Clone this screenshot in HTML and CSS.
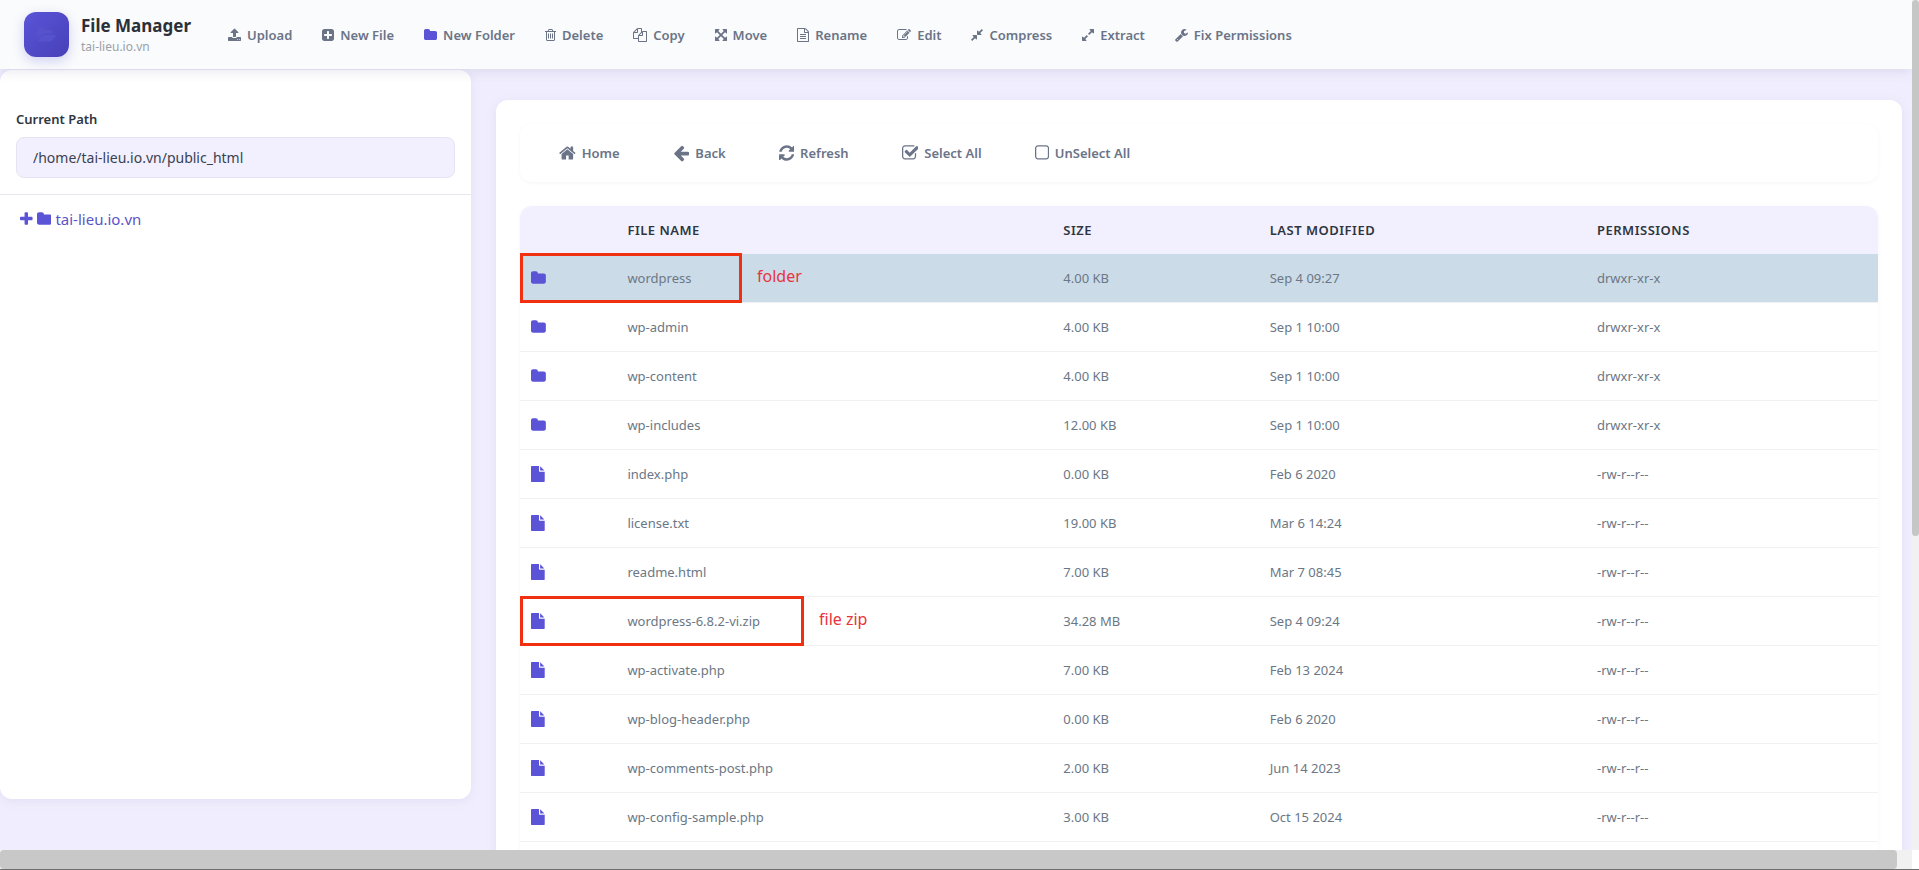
FILE: index.html
```html
<!DOCTYPE html>
<html lang="en">
<head>
  <meta charset="UTF-8">
  <meta name="viewport" content="width=device-width, initial-scale=1.0">
  <title>File Manager</title>
  <link rel="stylesheet" href="styles.css">
</head>
<body>
  <svg class="sprite" aria-hidden="true">
    <defs>
      <path id="upload" d="M1344 1472q0-26-19-45t-45-19-45 19-19 45 19 45 45 19 45-19 19-45zm256 0q0-26-19-45t-45-19-45 19-19 45 19 45 45 19 45-19 19-45zm128-224v320q0 40-28 68t-68 28h-1472q-40 0-68-28t-28-68v-320q0-40 28-68t68-28h427q21 56 70.5 92t110.5 36h256q61 0 110.5-36t70.5-92h427q40 0 68 28t28 68zm-325-648q-17 40-59 40h-256v448q0 26-19 45t-45 19h-256q-26 0-45-19t-19-45v-448h-256q-42 0-59-40-17-39 14-69l448-448q18-19 45-19t45 19l448 448q31 30 14 69z"/>
      <path id="plus-square" d="M1408 960v-128q0-26-19-45t-45-19h-320v-320q0-26-19-45t-45-19h-128q-26 0-45 19t-19 45v320h-320q-26 0-45 19t-19 45v128q0 26 19 45t45 19h320v320q0 26 19 45t45 19h128q26 0 45-19t19-45v-320h320q26 0 45-19t19-45zm256-544v960q0 119-84.5 203.5t-203.5 84.5h-960q-119 0-203.5-84.5t-84.5-203.5v-960q0-119 84.5-203.5t203.5-84.5h960q119 0 203.5 84.5t84.5 203.5z"/>
      <path id="folder" d="M1728 608v704q0 92-66 158t-158 66h-1216q-92 0-158-66t-66-158v-960q0-92 66-158t158-66h320q92 0 158 66t66 158v32h672q92 0 158 66t66 158z"/>
      <path id="folder-open" d="M1879 952q0 31-31 66l-336 396q-43 51-120.500 86.500t-143.500 35.500h-1088q-34 0-60.500-13t-26.500-43q0-31 31-66l336-396q43-51 120.500-86.500t143.500-35.500h1088q34 0 60.500 13t26.500 43zm-343-344v160h-832q-94 0-197 47.500t-164 119.500l-337 396-5 6q0-4-.5-12.500t-.5-12.500v-960q0-92 66-158t158-66h320q92 0 158 66t66 158v32h544q92 0 158 66t66 158z"/>
      <path id="trash" d="M704 736v576q0 14-9 23t-23 9h-64q-14 0-23-9t-9-23v-576q0-14 9-23t23-9h64q14 0 23 9t9 23zm256 0v576q0 14-9 23t-23 9h-64q-14 0-23-9t-9-23v-576q0-14 9-23t23-9h64q14 0 23 9t9 23zm256 0v576q0 14-9 23t-23 9h-64q-14 0-23-9t-9-23v-576q0-14 9-23t23-9h64q14 0 23 9t9 23zm128 724v-948h-896v948q0 22 7 40.500t14.500 27 10.500 8.500h832q3 0 10.500-8.500t14.500-27 7-40.500zm-672-1076h448l-48-117q-7-9-17-11h-317q-10 2-17 11zm928 32v64q0 14-9 23t-23 9h-96v948q0 83-47 143.500t-113 60.500h-832q-66 0-113-58.500t-47-141.500v-952h-96q-14 0-23-9t-9-23v-64q0-14 9-23t23-9h309l70-167q15-37 54-63t79-26h320q40 0 79 26t54 63l70 167h309q14 0 23 9t9 23z"/>
      <path id="copy" d="M1696 384q40 0 68 28t28 68v1216q0 40-28 68t-68 28h-960q-40 0-68-28t-28-68v-288h-544q-40 0-68-28t-28-68v-672q0-40 20-88t48-76l408-408q28-28 76-48t88-20h416q40 0 68 28t28 68v328q68-40 128-40h416zm-544 213l-299 299h299v-299zm-640-384l-299 299h299v-299zm196 647l316-316v-416h-384v416q0 40-28 68t-68 28h-416v640h512v-256q0-40 20-88t48-76zm956 804v-1152h-384v416q0 40-28 68t-68 28h-416v640h896z"/>
      <path id="move" d="M1411 541l-355 355 355 355 144-144q29-31 70-14 39 17 39 59v448q0 26-19 45t-45 19h-448q-42 0-59-40-17-39 14-69l144-144-355-355-355 355 144 144q31 30 14 69-17 40-59 40h-448q-26 0-45-19t-19-45v-448q0-42 40-59 39-17 69 14l144 144 355-355-355-355-144 144q-19 19-45 19-12 0-24-5-40-17-40-59v-448q0-26 19-45t45-19h448q42 0 59 40 17 39-14 69l-144 144 355 355 355-355-144-144q-31-30-14-69 17-40 59-40h448q26 0 45 19t19 45v448q0 42-39 59-13 5-25 5-26 0-45-19z"/>
      <path id="file-text" d="M1596 380q28 28 48 76t20 88v1152q0 40-28 68t-68 28h-1344q-40 0-68-28t-28-68v-1600q0-40 28-68t68-28h896q40 0 88 20t76 48zm-444-244v376h376q-10-29-22-41l-313-313q-12-12-41-22zm384 1528v-1024h-416q-40 0-68-28t-28-68v-416h-768v1536h1280zm-1024-864q0-14 9-23t23-9h704q14 0 23 9t9 23v64q0 14-9 23t-23 9h-704q-14 0-23-9t-9-23v-64zm736 224q14 0 23 9t9 23v64q0 14-9 23t-23 9h-704q-14 0-23-9t-9-23v-64q0-14 9-23t23-9h704zm0 256q14 0 23 9t9 23v64q0 14-9 23t-23 9h-704q-14 0-23-9t-9-23v-64q0-14 9-23t23-9h704z"/>
      <path id="edit" d="M888 1184l116-116-152-152-116 116v56h96v96h56zm440-720q-16-16-33 1l-350 350q-17 17-1 33t33-1l350-350q17-17 1-33zm80 594v190q0 119-84.500 203.500t-203.500 84.500h-832q-119 0-203.500-84.500t-84.500-203.500v-832q0-119 84.500-203.500t203.500-84.500h832q63 0 117 25 15 7 18 23 3 17-9 29l-49 49q-14 14-32 8-23-6-45-6h-832q-66 0-113 47t-47 113v832q0 66 47 113t113 47h832q66 0 113-47t47-113v-126q0-13 9-22l64-64q15-15 35-7t20 29zm-96-738l288 288-672 672h-288v-288zm444 132l-92 92-288-288 92-92q28-28 68-28t68 28l152 152q28 28 28 68t-28 68z"/>
      <path id="compress" d="M896 960v448q0 26-19 45t-45 19-45-19l-144-144-332 332q-10 10-23 10t-23-10l-114-114q-10-10-10-23t10-23l332-332-144-144q-19-19-19-45t19-45 45-19h448q26 0 45 19t19 45zm755-672q0 13-10 23l-332 332 144 144q19 19 19 45t-19 45-45 19h-448q-26 0-45-19t-19-45v-448q0-26 19-45t45-19 45 19l144 144 332-332q10-10 23-10t23 10l114 114q10 10 10 23z"/>
      <path id="expand" d="M883 1056q0 13-10 23l-332 332 144 144q19 19 19 45t-19 45-45 19h-448q-26 0-45-19t-19-45v-448q0-26 19-45t45-19 45 19l144 144 332-332q10-10 23-10t23 10l114 114q10 10 10 23zm781-864v448q0 26-19 45t-45 19-45-19l-144-144-332 332q-10 10-23 10t-23-10l-114-114q-10-10-10-23t10-23l332-332-144-144q-19-19-19-45t19-45 45-19h448q26 0 45 19t19 45z"/>
      <path id="wrench" d="M448 1472q0-26-19-45t-45-19-45 19-19 45 19 45 45 19 45-19 19-45zm644-420l-682 682q-37 37-90 37-52 0-91-37l-106-108q-38-36-38-90 0-53 38-91l681-681q39 98 114.500 173.500t173.500 114.500zm634-435q0 39-23 106-47 134-164.500 217.500t-258.500 83.500q-185 0-316.500-131.500t-131.500-316.500 131.500-316.500 316.500-131.500q58 0 121.500 16.500t107.500 46.500q16 11 16 28t-16 28l-293 169v224l193 107q5-3 79-48.500t135.500-81 70.500-35.500q15 0 23.500 10t8.500 25z"/>
      <path id="home" d="M1472 992v480q0 26-19 45t-45 19h-384v-384h-256v384h-384q-26 0-45-19t-19-45v-480q0-1 .5-3t.5-3l575-474 575 474q1 2 1 6zm223-69l-62 74q-8 9-21 11h-3q-13 0-21-7l-692-577-692 577q-12 8-24 7-13-2-21-11l-62-74q-8-10-7-23.500t11-21.500l719-599q32-26 76-26t76 26l244 204v-195q0-14 9-23t23-9h192q14 0 23 9t9 23v408l219 182q10 8 11 21.500t-7 23.500z"/>
      <path id="arrow-left" d="M1664 896v128q0 53-32.500 90.500t-84.500 37.500h-704l293 294q38 36 38 90t-38 90l-75 76q-37 37-90 37-52 0-91-37l-651-652q-37-37-37-90 0-52 37-91l651-650q38-38 91-38 52 0 90 38l75 74q38 38 38 91t-38 91l-293 293h704q52 0 84.500 37.500t32.500 90.500z"/>
      <path id="refresh" d="M1639 1056q0 5-1 7-64 268-268 434.500t-478 166.500q-146 0-282.500-55t-243.500-157l-129 129q-19 19-45 19t-45-19-19-45v-448q0-26 19-45t45-19h448q26 0 45 19t19 45-19 45l-137 137q71 66 161 102t187 36q134 0 250-65t186-179q11-17 53-117 8-23 30-23h192q13 0 22.500 9.500t9.500 22.500zm25-800v448q0 26-19 45t-45 19h-448q-26 0-45-19t-19-45 19-45l138-138q-148-137-349-137-134 0-250 65t-186 179q-11 17-53 117-8 23-30 23h-199q-13 0-22.500-9.500t-9.500-22.500v-7q65-268 270-434.500t480-166.500q146 0 284 55.500t245 156.500l130-129q19-19 45-19t45 19 19 45z"/>
      <path id="check-square" d="M1472 930v318q0 119-84.500 203.500t-203.500 84.500h-832q-119 0-203.500-84.500t-84.500-203.500v-832q0-119 84.500-203.500t203.500-84.500h832q63 0 117 25 15 7 18 23 3 17-9 29l-49 49q-10 10-23 10-3 0-9-2-23-6-45-6h-832q-66 0-113 47t-47 113v832q0 66 47 113t113 47h832q66 0 113-47t47-113v-254q0-13 9-22l64-64q10-10 23-10 6 0 12 3 20 8 20 29zm231-489l-814 814q-24 24-57 24t-57-24l-430-430q-24-24-24-57t24-57l110-110q24-24 57-24t57 24l263 263 647-647q24-24 57-24t57 24l110 110q24 24 24 57t-24 57z"/>
      <path id="square" d="M1312 256h-832q-66 0-113 47t-47 113v832q0 66 47 113t113 47h832q66 0 113-47t47-113v-832q0-66-47-113t-113-47zm288 160v832q0 119-84.500 203.500t-203.500 84.500h-832q-119 0-203.500-84.500t-84.500-203.500v-832q0-119 84.500-203.500t203.500-84.500h832q119 0 203.500 84.500t84.500 203.500z"/>
      <path id="plus" d="M1600 736v192q0 40-28 68t-68 28h-416v416q0 40-28 68t-68 28h-192q-40 0-68-28t-28-68v-416h-416q-40 0-68-28t-28-68v-192q0-40 28-68t68-28h416v-416q0-40 28-68t68-28h192q40 0 68 28t28 68v416h416q40 0 68 28t28 68z"/>
      <path id="file" d="M1152 512v-472q22 14 36 28l408 408q14 14 28 36h-472zm-128 32q0 40 28 68t68 28h544v1056q0 40-28 68t-68 28h-1344q-40 0-68-28t-28-68v-1600q0-40 28-68t68-28h800v544z"/>
    </defs>
  </svg>

  <div class="window">
    <div class="page">
      <header class="header">
        <div class="brand">
          <div class="logo">
            <svg class="icon" viewBox="0 0 1920 1792"><use href="#folder-open"/></svg>
          </div>
          <div>
            <h1>File Manager</h1>
            <p>tai-lieu.io.vn</p>
          </div>
        </div>
        <nav class="actions">
          <button type="button"><svg class="icon" viewBox="64 0 1664 1792"><use href="#upload"/></svg>Upload</button>
          <button type="button"><svg class="icon" viewBox="128 0 1536 1792"><use href="#plus-square"/></svg>New File</button>
          <button type="button"><svg class="icon accent" viewBox="64 0 1664 1792"><use href="#folder"/></svg>New Folder</button>
          <button type="button"><svg class="icon" viewBox="192 0 1408 1792"><use href="#trash"/></svg>Delete</button>
          <button type="button"><svg class="icon" viewBox="0 0 1792 1792"><use href="#copy"/></svg>Copy</button>
          <button type="button"><svg class="icon" viewBox="128 0 1536 1792"><use href="#move"/></svg>Move</button>
          <button type="button"><svg class="icon" viewBox="128 0 1536 1792"><use href="#file-text"/></svg>Rename</button>
          <button type="button"><svg class="icon" viewBox="0 0 1792 1792"><use href="#edit"/></svg>Edit</button>
          <button type="button"><svg class="icon" viewBox="128 0 1536 1792"><use href="#compress"/></svg>Compress</button>
          <button type="button"><svg class="icon" viewBox="128 0 1536 1792"><use href="#expand"/></svg>Extract</button>
          <button type="button"><svg class="icon" viewBox="64 0 1664 1792"><use href="#wrench"/></svg>Fix Permissions</button>
        </nav>
      </header>

      <div class="layout">
        <aside class="sidebar">
          <div class="path">
            <label for="path">Current Path</label>
            <input type="text" id="path" value="/home/tai-lieu.io.vn/public_html">
          </div>
          <a href="#" class="tree-item">
            <svg class="icon" viewBox="192 0 1408 1792"><use href="#plus"/></svg>
            <svg class="icon" viewBox="64 0 1664 1792"><use href="#folder"/></svg>
            tai-lieu.io.vn
          </a>
        </aside>

        <main class="content">
          <div class="toolbar">
            <button type="button"><svg class="icon" viewBox="64 0 1664 1792"><use href="#home"/></svg>Home</button>
            <button type="button"><svg class="icon" viewBox="64 0 1664 1792"><use href="#arrow-left"/></svg>Back</button>
            <button type="button"><svg class="icon" viewBox="128 0 1536 1792"><use href="#refresh"/></svg>Refresh</button>
            <button type="button"><svg class="icon" viewBox="64 0 1664 1792"><use href="#check-square"/></svg>Select All</button>
            <button type="button"><svg class="icon" viewBox="192 0 1408 1792"><use href="#square"/></svg>UnSelect All</button>
          </div>

          <table class="files">
            <colgroup>
              <col class="col-icon">
              <col class="col-name">
              <col class="col-size">
              <col class="col-date">
              <col class="col-perm">
            </colgroup>
            <thead>
              <tr><th></th><th>File Name</th><th>Size</th><th>Last Modified</th><th>Permissions</th></tr>
            </thead>
            <tbody>
              <tr class="selected">
                <td><svg class="icon" viewBox="64 0 1664 1792"><use href="#folder"/></svg><span class="mark mark-folder"><span>folder</span></span></td>
                <td>wordpress</td><td>4.00 KB</td><td>Sep 4 09:27</td><td>drwxr-xr-x</td>
              </tr>
              <tr>
                <td><svg class="icon" viewBox="64 0 1664 1792"><use href="#folder"/></svg></td>
                <td>wp-admin</td><td>4.00 KB</td><td>Sep 1 10:00</td><td>drwxr-xr-x</td>
              </tr>
              <tr>
                <td><svg class="icon" viewBox="64 0 1664 1792"><use href="#folder"/></svg></td>
                <td>wp-content</td><td>4.00 KB</td><td>Sep 1 10:00</td><td>drwxr-xr-x</td>
              </tr>
              <tr>
                <td><svg class="icon" viewBox="64 0 1664 1792"><use href="#folder"/></svg></td>
                <td>wp-includes</td><td>12.00 KB</td><td>Sep 1 10:00</td><td>drwxr-xr-x</td>
              </tr>
              <tr>
                <td><svg class="icon" viewBox="128 0 1536 1792"><use href="#file"/></svg></td>
                <td>index.php</td><td>0.00 KB</td><td>Feb 6 2020</td><td>-rw-r--r--</td>
              </tr>
              <tr>
                <td><svg class="icon" viewBox="128 0 1536 1792"><use href="#file"/></svg></td>
                <td>license.txt</td><td>19.00 KB</td><td>Mar 6 14:24</td><td>-rw-r--r--</td>
              </tr>
              <tr>
                <td><svg class="icon" viewBox="128 0 1536 1792"><use href="#file"/></svg></td>
                <td>readme.html</td><td>7.00 KB</td><td>Mar 7 08:45</td><td>-rw-r--r--</td>
              </tr>
              <tr>
                <td><svg class="icon" viewBox="128 0 1536 1792"><use href="#file"/></svg><span class="mark mark-zip"><span>file zip</span></span></td>
                <td>wordpress-6.8.2-vi.zip</td><td>34.28 MB</td><td>Sep 4 09:24</td><td>-rw-r--r--</td>
              </tr>
              <tr>
                <td><svg class="icon" viewBox="128 0 1536 1792"><use href="#file"/></svg></td>
                <td>wp-activate.php</td><td>7.00 KB</td><td>Feb 13 2024</td><td>-rw-r--r--</td>
              </tr>
              <tr>
                <td><svg class="icon" viewBox="128 0 1536 1792"><use href="#file"/></svg></td>
                <td>wp-blog-header.php</td><td>0.00 KB</td><td>Feb 6 2020</td><td>-rw-r--r--</td>
              </tr>
              <tr>
                <td><svg class="icon" viewBox="128 0 1536 1792"><use href="#file"/></svg></td>
                <td>wp-comments-post.php</td><td>2.00 KB</td><td>Jun 14 2023</td><td>-rw-r--r--</td>
              </tr>
              <tr>
                <td><svg class="icon" viewBox="128 0 1536 1792"><use href="#file"/></svg></td>
                <td>wp-config-sample.php</td><td>3.00 KB</td><td>Oct 15 2024</td><td>-rw-r--r--</td>
              </tr>
              <tr>
                <td></td><td></td><td></td><td></td><td></td>
              </tr>
            </tbody>
          </table>
        </main>
      </div>
    </div>
    <div class="scroll-y"><div class="thumb"></div></div>
    <div class="scroll-x"><div class="thumb"></div></div>
    <div class="corner"></div>
  </div>
</body>
</html>
```
FILE: styles.css
```css
* {
  margin: 0;
  padding: 0;
  box-sizing: border-box;
}

body {
  font-family: "Segoe UI", "Noto Sans", sans-serif;
  font-size: 13px;
  color: #6b7487;
  background: #f0eefe;
  overflow: hidden;
}

button,
input {
  font: inherit;
  color: inherit;
  border: none;
  background: none;
}

.sprite {
  display: none;
}

.icon {
  height: 14px;
  width: auto;
  fill: currentColor;
  flex-shrink: 0;
}

.accent {
  color: #5b54d6;
}

/* window frame with its scrollbars */
.window {
  display: grid;
  grid-template-columns: 1fr 7px;
  grid-template-rows: 1fr 20px;
  height: 100vh;
}

.page {
  overflow: hidden;
  min-height: 0;
}

.scroll-y {
  background: #f1f1f4;
}

.scroll-y .thumb {
  height: 63%;
  background: #c5c7c6;
  border-radius: 4px;
}

.scroll-x {
  background: #f1f1f1;
  border-bottom: 1px solid #6f6f6f;
}

.scroll-x .thumb {
  width: 99.2%;
  height: 100%;
  background: #c8c8c8;
  border-radius: 4px;
}

.corner {
  background: #fff;
  border-bottom: 1px solid #6f6f6f;
}

/* header */
.header {
  position: relative;
  display: flex;
  align-items: center;
  gap: 37px;
  height: 69px;
  padding: 0 24px;
  background: #f9fbfc;
  box-shadow: 0 2px 12px rgba(60, 50, 110, 0.12);
}

.brand {
  display: flex;
  align-items: center;
  gap: 12px;
}

.logo {
  display: flex;
  align-items: center;
  justify-content: center;
  width: 45px;
  height: 45px;
  border-radius: 12px;
  color: #5652cb;
  background: linear-gradient(135deg, #5a54d8, #4840b8);
  box-shadow: 0 4px 12px rgba(90, 84, 216, 0.25);
}

.logo .icon {
  height: 18px;
}

.brand h1 {
  font-size: 17px;
  line-height: 24px;
  font-weight: 700;
  color: #2b3038;
}

.brand p {
  font-size: 12px;
  line-height: 18px;
  color: #9ba1a8;
}

.actions {
  display: flex;
  gap: 30px;
}

.actions button {
  display: flex;
  align-items: center;
  gap: 6px;
  font-weight: 600;
  white-space: nowrap;
  cursor: pointer;
}

/* page body */
.layout {
  display: grid;
  grid-template-columns: 471fr 1406fr;
  gap: 25px;
  align-items: start;
  padding-right: 10px;
}

.sidebar {
  height: calc(100vh - 141px);
  margin-top: 1px;
  background: #fff;
  border-radius: 12px;
  box-shadow: 0 2px 12px rgba(60, 50, 110, 0.08);
}

.path {
  padding: 39px 16px 16px;
  border-bottom: 1px solid #e6e6ee;
}

.path label {
  display: block;
  margin-bottom: 7px;
  line-height: 21px;
  font-weight: 600;
  color: #2f3640;
}

.path input {
  width: 100%;
  height: 41px;
  padding: 0 16px;
  font-size: 14px;
  color: #3a4150;
  background: #f2f0fe;
  border: 1px solid #e6e3f3;
  border-radius: 8px;
}

.tree-item {
  display: flex;
  align-items: center;
  gap: 4px;
  padding: 12px 20px;
  font-size: 15px;
  line-height: 24px;
  color: #5b54c8;
  text-decoration: none;
}

.tree-item .icon {
  height: 16px;
  color: #5b54d6;
}

.content {
  min-height: 100vh;
  margin-top: 31px;
  padding: 24px;
  background: #fff;
  border-radius: 12px;
  box-shadow: 0 2px 12px rgba(60, 50, 110, 0.08);
}

.toolbar {
  display: flex;
  align-items: center;
  gap: 53px;
  height: 58px;
  margin-bottom: 24px;
  padding: 0 39px;
  border-radius: 12px;
  box-shadow: 0 1px 5px rgba(0, 0, 0, 0.04);
}

.toolbar button {
  display: flex;
  align-items: center;
  gap: 6px;
  font-weight: 600;
  white-space: nowrap;
  cursor: pointer;
}

.toolbar .icon {
  height: 18px;
}

/* file list */
.files {
  width: 100%;
  table-layout: fixed;
  border-collapse: separate;
  border-spacing: 0;
  border-radius: 12px;
  box-shadow: 0 1px 5px rgba(0, 0, 0, 0.04);
}

.col-icon { width: 7.1%; }
.col-name { width: 32.1%; }
.col-size { width: 15.2%; }
.col-date { width: 24.1%; }

.files th {
  height: 48px;
  padding: 0 11px;
  text-align: left;
  font-weight: 600;
  letter-spacing: 0.5px;
  text-transform: uppercase;
  color: #2f3640;
  background: #f2f0fe;
}

.files th:first-child {
  border-top-left-radius: 12px;
}

.files th:last-child {
  border-top-right-radius: 12px;
}

.files td {
  position: relative;
  height: 49px;
  padding: 0 11px;
  color: #6b7785;
  border-bottom: 1px solid #f1f1f4;
}

.files td .icon {
  display: block;
  height: 16px;
  color: #5b54d6;
}

.files .selected td {
  background: #cbdce8;
}

/* red callouts over the rows */
.mark {
  position: absolute;
  z-index: 1;
  top: -1px;
  left: 0;
  height: 50px;
  border: 3px solid #f03010;
  pointer-events: none;
}

.mark span {
  position: absolute;
  left: 100%;
  top: 6px;
  margin-left: 18px;
  font-size: 16px;
  line-height: 28px;
  white-space: nowrap;
  color: #e8343c;
}

.mark-folder {
  width: 222px;
}

.mark-zip {
  width: 284px;
}
```
